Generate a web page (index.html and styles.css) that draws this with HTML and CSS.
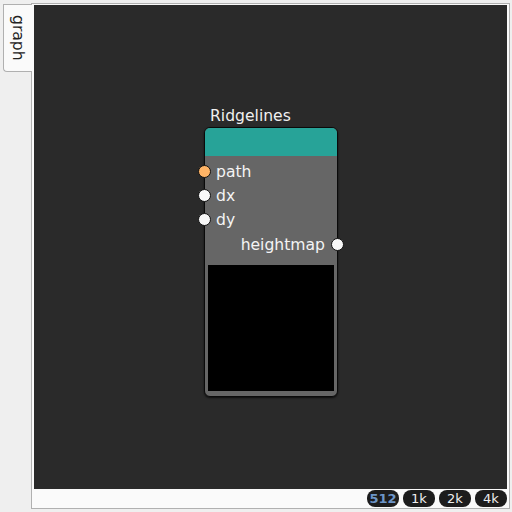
FILE: index.html
```html
<!DOCTYPE html>
<html lang="en">
<head>
    <title>Graph Editor</title>
    <link rel="stylesheet" href="styles.css">
</head>
<body>
    <div class="app">
        <!-- Side tabs -->
        <div class="tabs">
            <div class="tab active">graph</div>
        </div>

        <!-- Graph panel -->
        <div class="panel">
            <div class="canvas">
                <div class="node">
                    <div class="node-title">Ridgelines</div>
                    <div class="node-box">
                        <div class="node-header"></div>
                        <div class="node-body">
                            <div class="port in"><span class="dot orange"></span>path</div>
                            <div class="port in"><span class="dot"></span>dx</div>
                            <div class="port in"><span class="dot"></span>dy</div>
                            <div class="port out">heightmap<span class="dot"></span></div>
                            <div class="preview"></div>
                        </div>
                    </div>
                </div>
            </div>

            <!-- Resolution picker -->
            <div class="footer">
                <button class="res selected">512</button>
                <button class="res">1k</button>
                <button class="res">2k</button>
                <button class="res">4k</button>
            </div>
        </div>
    </div>
</body>
</html>
```

FILE: styles.css
```css
/* Base layout */
body {
    margin: 0;
    background: #efefef;
    font-family: "DejaVu Sans", sans-serif;
}

.app {
    display: flex;
    height: 512px;
}

/* Vertical tab strip */
.tabs {
    width: 31px;
    flex-shrink: 0;
    padding-top: 4px;
    padding-left: 3px;
    box-sizing: border-box;
}

.tab {
    writing-mode: vertical-rl;
    width: 29px;
    height: 68px;
    box-sizing: border-box;
    background: #fafafa;
    border: 1px solid #b0b0b0;
    border-right: none;
    border-radius: 0 0 0 4px;
    font-size: 15.6px;
    color: #222;
    display: flex;
    align-items: center;
    justify-content: center;
    position: relative;
    z-index: 1;
}

/* Main panel */
.panel {
    margin: 3px 2px 3px 0;
    width: 480px;
    border: 1px solid #b0b0b0;
    background: #fafafa;
    padding: 1px 2px 1px 2px;
    display: flex;
    flex-direction: column;
    box-sizing: border-box;
}

.canvas {
    flex-grow: 1;
    background: #2a2a2a;
    position: relative;
    overflow: hidden;
}

/* Graph node */
.node {
    position: absolute;
    left: 170px;
    top: 100px;
    width: 134px;
}

.node-title {
    color: #f0f0f0;
    font-size: 15.6px;
    padding-left: 6px;
    height: 22px;
    line-height: 22px;
}

.node-box {
    border: 1px solid #0a0a0a;
    border-radius: 6px;
    background: #666;
    box-shadow: 0 1px 2px rgba(0, 0, 0, 0.7);
}

.node-header {
    height: 28px;
    background: #27a398;
    border-radius: 5px 5px 0 0;
}

.node-body {
    padding: 3px 0 5px;
    border-radius: 0 0 5px 5px;
}

.port {
    height: 24px;
    display: flex;
    align-items: center;
    padding-top: 2px;
    box-sizing: border-box;
    color: #f4f4f4;
    font-size: 15.6px;
    position: relative;
}

.port.in {
    padding-left: 11px;
}

.port.out {
    justify-content: flex-end;
    padding-right: 12px;
    margin-top: 1px;
}

.dot {
    position: absolute;
    width: 11px;
    height: 11px;
    border-radius: 50%;
    background: #f8f8f8;
    border: 1px solid #111;
    top: 6px;
}

.port.in .dot {
    left: -7px;
}

.port.out .dot {
    right: -7px;
}

.dot.orange {
    background: #ffb466;
}

.preview {
    margin: 9px 3px 0;
    height: 126px;
    background: #000;
}

/* Footer with resolution buttons */
.footer {
    height: 18px;
    display: flex;
    justify-content: flex-end;
    align-items: center;
    gap: 4px;
}

.res {
    width: 32px;
    height: 17px;
    border: none;
    border-radius: 8px;
    background: #1c1c1c;
    color: #eee;
    font-family: "DejaVu Sans", sans-serif;
    font-size: 13px;
    padding: 0;
    line-height: 17px;
}

.res.selected {
    color: #6d95c8;
    font-weight: bold;
}
```
